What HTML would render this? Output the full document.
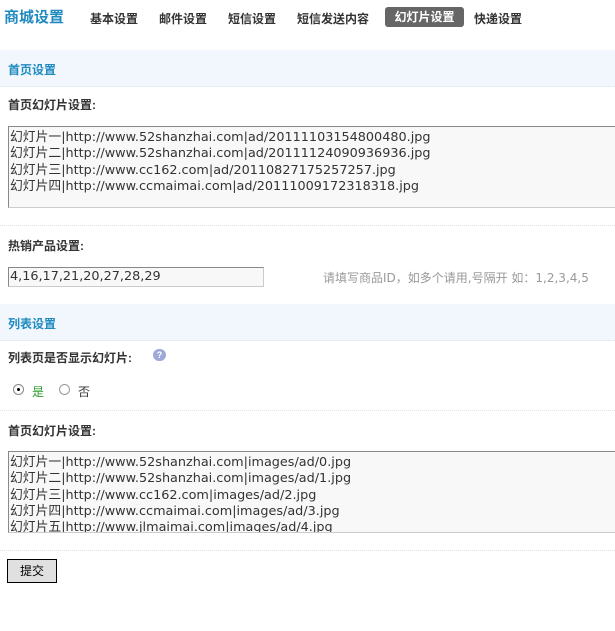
<!DOCTYPE html>
<html><head><meta charset="utf-8"><style>
body{margin:0;background:#fff;font-family:"Liberation Sans","Noto Sans CJK SC",sans-serif;font-size:12px;color:#333;width:615px;height:631px;overflow:hidden;position:relative}
.a{position:absolute;white-space:nowrap}
.t{font-weight:bold;color:#333;font-size:12px}
.band{position:absolute;left:0;width:615px;height:36px;background:#f1f7fc;border-bottom:1px dotted #dde3e8}
.band span{position:absolute;left:8px;top:11px;color:#1f8ac0;font-weight:bold;font-size:12px}
.sep{position:absolute;left:0;width:615px;border-top:1px dotted #e2e2e2}
.ta{position:absolute;left:8px;width:607px;background:#f8f8f8;border:1px solid #888;border-right:none;border-bottom-color:#ccc;font-family:"DejaVu Sans","Noto Sans CJK SC",sans-serif;font-size:12.8px;line-height:16.3px;color:#333;padding:3px 1px 0;box-sizing:border-box;overflow:hidden;white-space:pre}
</style></head><body>
<div class="a" style="left:4px;top:6px;font-size:15px;font-weight:bold;color:#1f8ac0">商城设置</div>
<div class="a t" style="left:90px;top:10px">基本设置</div>
<div class="a t" style="left:159px;top:10px">邮件设置</div>
<div class="a t" style="left:228px;top:10px">短信设置</div>
<div class="a t" style="left:297px;top:10px">短信发送内容</div>
<div class="a" style="left:385px;top:7px;width:79px;height:20px;background:#666;border-radius:3px;color:#fff;font-weight:bold;text-align:center;line-height:20px">幻灯片设置</div>
<div class="a t" style="left:474px;top:10px">快递设置</div>

<div class="band" style="top:50px"><span>首页设置</span></div>
<div class="a t" style="left:8px;top:96px">首页幻灯片设置:</div>
<div class="ta" style="top:126px;height:82px">幻灯片一|http://www.52shanzhai.com|ad/20111103154800480.jpg
幻灯片二|http://www.52shanzhai.com|ad/20111124090936936.jpg
幻灯片三|http://www.cc162.com|ad/20110827175257257.jpg
幻灯片四|http://www.ccmaimai.com|ad/20111009172318318.jpg</div>
<div class="sep" style="top:225px"></div>
<div class="a t" style="left:8px;top:237px">热销产品设置:</div>
<div class="a" style="left:8px;top:267px;width:256px;height:20px;box-sizing:border-box;border:1px solid #888;border-right-color:#ccc;border-bottom-color:#ccc;background:#f8f8f8;font-family:'DejaVu Sans',sans-serif;font-size:12.8px;line-height:18px;padding-left:1px;color:#333">4,16,17,21,20,27,28,29</div>
<div class="a" style="left:323px;top:269px;color:#999;font-family:'DejaVu Sans','Noto Sans CJK SC',sans-serif;font-size:12px">请填写商品ID，如多个请用,号隔开 如：1,2,3,4,5</div>

<div class="band" style="top:304px"><span>列表设置</span></div>
<div class="a t" style="left:8px;top:349px">列表页是否显示幻灯片:</div>
<div class="a" style="left:153px;top:349px;width:13px;height:12px;border-radius:6px;background:#9fa9d8;color:#fff;font-size:9px;font-weight:bold;text-align:center;line-height:12px">?</div>
<div class="a" style="left:13px;top:384px;width:9px;height:9px;border-radius:50%;border:1px solid #888;background:#fff"><div style="width:3px;height:3px;background:#000;margin:3px;border-radius:50%"></div></div>
<div class="a" style="left:32px;top:383px;color:#2a9a2a">是</div>
<div class="a" style="left:59px;top:384px;width:9px;height:9px;border-radius:50%;border:1px solid #999;background:#fff"></div>
<div class="a" style="left:78px;top:383px">否</div>
<div class="sep" style="top:410px"></div>
<div class="a t" style="left:8px;top:422px">首页幻灯片设置:</div>
<div class="ta" style="top:451px;height:82px">幻灯片一|http://www.52shanzhai.com|images/ad/0.jpg
幻灯片二|http://www.52shanzhai.com|images/ad/1.jpg
幻灯片三|http://www.cc162.com|images/ad/2.jpg
幻灯片四|http://www.ccmaimai.com|images/ad/3.jpg
幻灯片五|http://www.jlmaimai.com|images/ad/4.jpg</div>
<div class="sep" style="top:550px"></div>
<div class="a" style="left:7px;top:559px;width:50px;height:24px;box-sizing:border-box;border:1px solid #000;background:#e0e0e0;text-align:center;line-height:22px;color:#000">提交</div>
</body></html>
